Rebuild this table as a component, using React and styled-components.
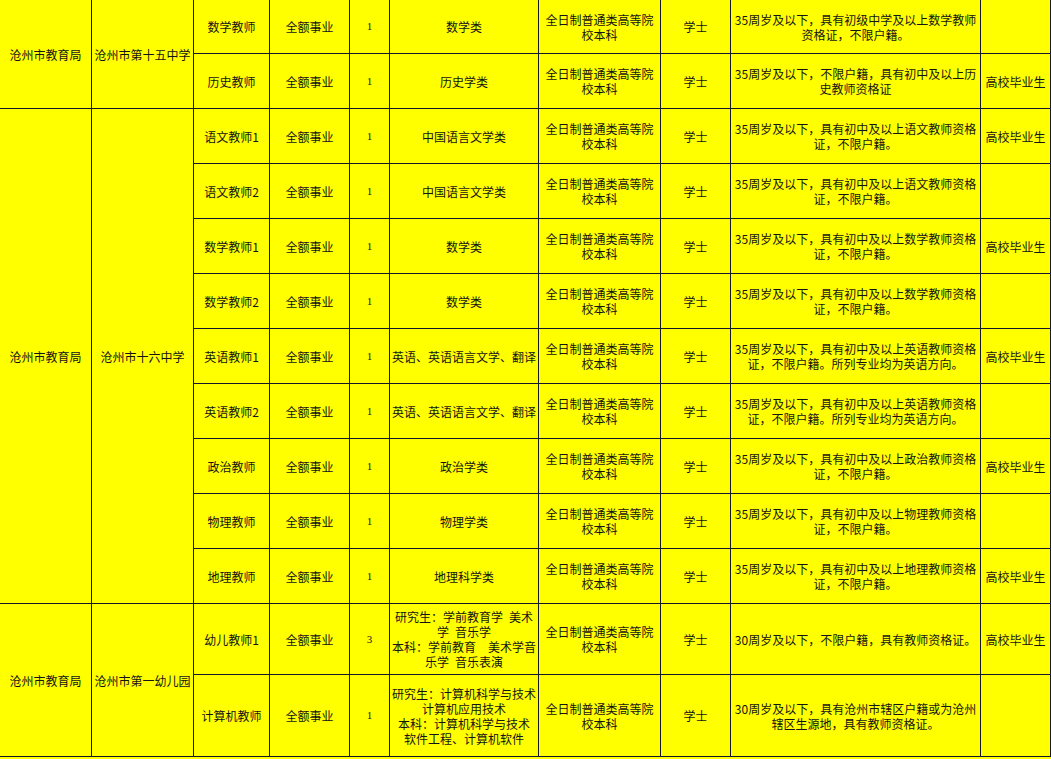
import React from "react";
import styled, { createGlobalStyle } from "styled-components";

const Global = createGlobalStyle`
  html, body {
    margin: 0;
    padding: 0;
    background: #ffff00;
  }
  body {
    font-family: "Noto Sans CJK SC", "Noto Sans", sans-serif;
    color: #141414;
  }
`;

const Sheet = styled.div`
  display: grid;
  grid-template-columns: 92px 102px 76px 80px 40px 149px 122px 70px 250px 70px;
  grid-template-rows: 54px repeat(10, 55px) 71px 82px;
  width: 1051px;
  background: #ffff00;
`;

const Cell = styled.div`
  grid-row: span ${(p) => p.$span || 1};
  display: flex;
  flex-direction: column;
  align-items: center;
  justify-content: center;
  text-align: center;
  border-right: 1px solid #17172c;
  border-bottom: 1px solid #17172c;
  font-size: ${(p) => (p.$num ? "11px" : "12px")};
  font-family: ${(p) =>
    p.$num
      ? `"Liberation Serif", "Noto Sans CJK SC", serif`
      : `"Noto Sans CJK SC", "Noto Sans", sans-serif`};
  line-height: 15px;
  padding: 0 1px;
  overflow: hidden;
`;

const Line = styled.span`
  display: block;
  white-space: pre;
`;

const Lines = ({ items }) =>
  (Array.isArray(items) ? items : [items]).map((t, i) => <Line key={i}>{t}</Line>);

const edu = ["全日制普通类高等院", "校本科"];
const std = (subj) => [`35周岁及以下，具有初中及以上${subj}教师资格`, "证，不限户籍。"];

const groups = [
  {
    org: "沧州市教育局",
    unit: "沧州市第十五中学",
    rows: [
      {
        title: "数学教师",
        count: "1",
        major: "数学类",
        req: ["35周岁及以下，具有初级中学及以上数学教师", "资格证，不限户籍。"],
        note: "",
      },
      {
        title: "历史教师",
        count: "1",
        major: "历史学类",
        req: ["35周岁及以下，不限户籍，具有初中及以上历", "史教师资格证"],
        note: "高校毕业生",
      },
    ],
  },
  {
    org: "沧州市教育局",
    unit: "沧州市十六中学",
    rows: [
      { title: "语文教师1", count: "1", major: "中国语言文学类", req: std("语文"), note: "高校毕业生" },
      { title: "语文教师2", count: "1", major: "中国语言文学类", req: std("语文"), note: "" },
      { title: "数学教师1", count: "1", major: "数学类", req: std("数学"), note: "高校毕业生" },
      { title: "数学教师2", count: "1", major: "数学类", req: std("数学"), note: "" },
      {
        title: "英语教师1",
        count: "1",
        major: "英语、英语语言文学、翻译",
        req: ["35周岁及以下，具有初中及以上英语教师资格", "证，不限户籍。所列专业均为英语方向。"],
        note: "高校毕业生",
      },
      {
        title: "英语教师2",
        count: "1",
        major: "英语、英语语言文学、翻译",
        req: ["35周岁及以下，具有初中及以上英语教师资格", "证，不限户籍。所列专业均为英语方向。"],
        note: "",
      },
      { title: "政治教师", count: "1", major: "政治学类", req: std("政治"), note: "高校毕业生" },
      { title: "物理教师", count: "1", major: "物理学类", req: std("物理"), note: "" },
      { title: "地理教师", count: "1", major: "地理科学类", req: std("地理"), note: "高校毕业生" },
    ],
  },
  {
    org: "沧州市教育局",
    unit: "沧州市第一幼儿园",
    rows: [
      {
        title: "幼儿教师1",
        count: "3",
        major: ["研究生：学前教育学\u2002美术", "学\u2002音乐学", "本科：学前教育\u3000美术学音", "乐学\u2002音乐表演"],
        req: "30周岁及以下，不限户籍，具有教师资格证。",
        note: "高校毕业生",
      },
      {
        title: "计算机教师",
        count: "1",
        major: ["研究生：计算机科学与技术", "计算机应用技术", "本科：计算机科学与技术", "软件工程、计算机软件"],
        req: ["30周岁及以下，具有沧州市辖区户籍或为沧州", "辖区生源地，具有教师资格证。"],
        note: "",
      },
    ],
  },
];

export default function App() {
  return (
    <>
      <Global />
      <Sheet>
        {groups.map((g, gi) => (
          <React.Fragment key={gi}>
            {g.rows.map((r, ri) => (
              <React.Fragment key={ri}>
                {ri === 0 && (
                  <>
                    <Cell $span={g.rows.length}>{g.org}</Cell>
                    <Cell $span={g.rows.length}>{g.unit}</Cell>
                  </>
                )}
                <Cell>{r.title}</Cell>
                <Cell>全额事业</Cell>
                <Cell $num>{r.count}</Cell>
                <Cell>
                  <Lines items={r.major} />
                </Cell>
                <Cell>
                  <Lines items={edu} />
                </Cell>
                <Cell>学士</Cell>
                <Cell>
                  <Lines items={r.req} />
                </Cell>
                <Cell>{r.note}</Cell>
              </React.Fragment>
            ))}
          </React.Fragment>
        ))}
      </Sheet>
    </>
  );
}
